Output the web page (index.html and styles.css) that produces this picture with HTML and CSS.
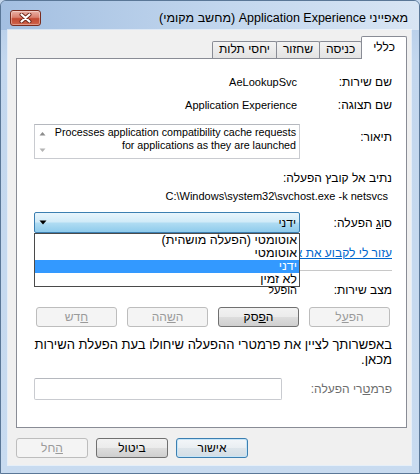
FILE: index.html
```html
<!DOCTYPE html>
<html lang="he" dir="rtl">
<head>
    <meta charset="UTF-8">
    <title>מאפייני Application Experience (מחשב מקומי)</title>
    <link rel="stylesheet" href="styles.css">
</head>
<body>

<div class="window">
    <div class="titlebar">
        <span class="title">מאפייני Application Experience (מחשב מקומי)</span>
        <button class="close-btn" type="button">
            <svg width="13" height="10" viewBox="0 0 13 10">
                <path d="M2.5 1.5 L10.5 8.5 M10.5 1.5 L2.5 8.5" stroke="#6a2418" stroke-width="4" stroke-linecap="round"/>
                <path d="M2.5 1.5 L10.5 8.5 M10.5 1.5 L2.5 8.5" stroke="#fff" stroke-width="2.2" stroke-linecap="round"/>
            </svg>
        </button>
    </div>

    <div class="client">
        <!-- tabs -->
        <div class="tabs">
            <div class="tab active">כללי</div>
            <div class="tab">כניסה</div>
            <div class="tab">שחזור</div>
            <div class="tab">יחסי תלות</div>
        </div>

        <div class="panel">
            <div class="row row-name">
                <span class="label">שם שירות:</span>
                <span class="value" dir="ltr">AeLookupSvc</span>
            </div>
            <div class="row row-display">
                <span class="label">שם תצוגה:</span>
                <span class="value" dir="ltr">Application Experience</span>
            </div>
            <div class="row row-desc">
                <span class="label">תיאור:</span>
                <div class="desc-box">
                    <div class="desc-scroll">
                        <svg width="7" height="5" viewBox="0 0 7 5"><path d="M0.5 4.5 L3.5 1 L6.5 4.5 Z" fill="#8c8c8c"/></svg>
                        <svg width="7" height="5" viewBox="0 0 7 5"><path d="M0.5 0.5 L3.5 4 L6.5 0.5 Z" fill="#b4b4b4"/></svg>
                    </div>
                    <div class="desc-text" dir="ltr">Processes application compatibility cache requests for applications as they are launched</div>
                </div>
            </div>

            <div class="path-label">נתיב אל קובץ הפעלה:</div>
            <div class="path-value" dir="ltr">C:\Windows\system32\svchost.exe -k netsvcs</div>

            <div class="row row-startup">
                <span class="label">סו<u>ג</u> הפעלה:</span>
                <div class="combo-wrap">
                    <div class="combo">
                        <span class="combo-text">ידני</span>
                        <svg class="combo-arrow" width="8" height="5" viewBox="0 0 8 5"><path d="M0.5 0.5 L7.5 0.5 L4 4.5 Z" fill="#000"/></svg>
                    </div>
                    <ul class="combo-list">
                        <li>אוטומטי (הפעלה מושהית)</li>
                        <li>אוטומטי</li>
                        <li class="selected">ידני</li>
                        <li>לא זמין</li>
                    </ul>
                </div>
            </div>

            <a class="help-link" href="#">עזור לי לקבוע את אפשרויות הפעלת השירות.</a>
            <div class="separator"></div>

            <div class="row row-status">
                <span class="label">מצב שירות:</span>
                <span class="value">הופעל</span>
            </div>

            <div class="service-buttons">
                <button class="btn" type="button" disabled>הפ<u>ע</u>ל</button>
                <button class="btn" type="button">ה<u>פ</u>סק</button>
                <button class="btn" type="button" disabled>ה<u>ש</u>הה</button>
                <button class="btn" type="button" disabled><u>ח</u>דש</button>
            </div>

            <p class="hint">באפשרותך לציין את פרמטרי ההפעלה שיחולו בעת הפעלת השירות מכאן.</p>

            <div class="row row-params">
                <span class="label disabled">פרמ<u>ט</u>רי הפעלה:</span>
                <input class="params-input" type="text" disabled>
            </div>
        </div>

        <div class="dialog-buttons">
            <button class="btn default" type="button">אישור</button>
            <button class="btn" type="button">ביטול</button>
            <button class="btn" type="button" disabled><u>ה</u>חל</button>
        </div>
    </div>
</div>

</body>
</html>
```

FILE: styles.css
```css
body {
    margin: 0;
    font-family: "Liberation Sans", "DejaVu Sans", sans-serif;
    font-size: 11px;
    color: #000;
    background: #c3d6ec;
}
.window {
    width: 420px;
    height: 474px;
    box-sizing: border-box;
    display: flex;
    flex-direction: column;
    border: 1px solid #5a7797;
    border-radius: 6px 6px 0 0;
    background: linear-gradient(to bottom, #b3cbe7 0, #c3d7ee 60px, #c8dbf0 100%);
    overflow: hidden;
}
.titlebar {
    height: 29px;
    box-sizing: border-box;
    padding: 5px 11px 0 9px;
    display: flex;
    align-items: center;
    justify-content: space-between;
    background: linear-gradient(to left, #d8e5f4 0, #c3d7ee 45%, #a3bfe1 100%);
}
.title {
    font-size: 12.5px;
    white-space: nowrap;
}
.close-btn {
    width: 31px;
    height: 16px;
    padding: 0;
    border: 1px solid #7a2d20;
    border-radius: 3px;
    background: linear-gradient(to bottom, #eab1a6 0, #d9806f 45%, #c24a33 55%, #d0644c 100%);
    display: flex;
    align-items: center;
    justify-content: center;
    box-shadow: inset 0 0 0 1px rgba(255, 255, 255, 0.35);
}
.client {
    flex: 1;
    margin: 0 8px 8px 7px;
    padding: 6px 4px 7px 8px;
    background: #f0f0f0;
    display: flex;
    flex-direction: column;
    box-shadow: 0 0 0 1px rgba(255, 255, 255, 0.55);
}

/* tabs */
.tabs {
    height: 23px;
    margin-bottom: -1px;
    display: flex;
    align-items: flex-end;
    position: relative;
    z-index: 1;
}
.tab {
    height: 17px;
    box-sizing: border-box;
    margin-bottom: 1px;
    margin-left: -1px;
    padding: 0 6px;
    line-height: 15px;
    font-size: 12px;
    border: 1px solid #898c95;
    border-bottom: none;
    border-radius: 2px 2px 0 0;
    background: linear-gradient(to bottom, #f3f3f3, #e3e3e3);
}
.tab.active {
    height: 23px;
    margin-bottom: 0;
    padding: 3px 11px 0 11px;
    background: #fff;
    position: relative;
    z-index: 2;
}
.panel {
    flex: 1;
    background: #fff;
    border: 1px solid #898c95;
    padding: 15px 14px 0 17px;
    display: flex;
    flex-direction: column;
}

/* label / value rows */
.row {
    display: flex;
    line-height: 16px;
}
.label {
    width: 92px;
    flex-shrink: 0;
    font-size: 12px;
}
.label.disabled {
    width: 110px;
    color: #6d6d6d;
}
.value {
    flex: 1;
    padding-right: 3px;
    text-align: right;
}
.row-display {
    margin-top: 7px;
}
.row-desc {
    margin-top: 11px;
}
.row-desc .label {
    padding-top: 5px;
}
.desc-box {
    flex: 1;
    height: 35px;
    box-sizing: border-box;
    border: 1px solid #c9cbd0;
    border-top-color: #b5b8be;
    display: flex;
    flex-direction: row-reverse;
}
.desc-text {
    flex: 1;
    padding: 1px 3px 0 0;
    font-size: 10.7px;
    line-height: 13px;
    text-align: right;
}
.desc-scroll {
    width: 15px;
    display: flex;
    flex-direction: column;
    justify-content: space-between;
    align-items: center;
    padding: 6px 0 5px;
    box-sizing: border-box;
}
.path-label {
    margin-top: 11px;
    line-height: 16px;
    font-size: 12px;
}
.path-value {
    margin-top: 2px;
    padding-right: 4px;
    line-height: 16px;
    text-align: right;
}

/* startup type combo */
.row-startup {
    margin-top: 8px;
    align-items: center;
}
.combo-wrap {
    flex: 1;
    position: relative;
    z-index: 3;
}
.combo {
    height: 21px;
    box-sizing: border-box;
    border: 1px solid #3c7fb1;
    border-radius: 2px;
    background: linear-gradient(to bottom, #e8f5fc 0, #d2ebf8 45%, #aedbf2 55%, #8fcbec 100%);
    display: flex;
    align-items: center;
    justify-content: space-between;
    padding: 0 3px 0 4px;
}
.combo-text {
    font-size: 12px;
}
.combo-list {
    position: absolute;
    top: 100%;
    left: 0;
    right: 0;
    margin: 0;
    padding: 0;
    list-style: none;
    background: #fff;
    border: 1px solid #4a4a4a;
    font-size: 12.5px;
}
.combo-list li {
    height: 13px;
    line-height: 13px;
    padding-right: 2px;
}
.combo-list li.selected {
    background: #3399ff;
    color: #fff;
}
.help-link {
    margin-top: 12px;
    line-height: 16px;
    font-size: 12px;
    color: #0066cc;
    white-space: nowrap;
}
.separator {
    margin-top: 9px;
    height: 1px;
    border-bottom: 1px solid #fff;
    background: #c8c8c8;
}
.row-status {
    margin-top: 10px;
}

/* buttons */
.btn {
    width: 81px;
    height: 20px;
    box-sizing: border-box;
    padding: 0;
    font-family: inherit;
    font-size: 12px;
    color: #000;
    border: 1px solid #707070;
    border-radius: 3px;
    background: linear-gradient(to bottom, #f2f2f2 0, #ebebeb 50%, #dddddd 51%, #cfcfcf 100%);
}
.btn:disabled {
    color: #9a9a9a;
    border-color: #bdbdbd;
    background: #f4f4f4;
}
.btn.default {
    border-color: #3c7fb1;
    background: linear-gradient(to bottom, #f3f6f9 0, #e9eef2 50%, #dde5eb 51%, #d3dde5 100%);
    box-shadow: inset 0 0 0 1px #c5e5f8;
}
.service-buttons {
    margin-top: 9px;
    padding-right: 2px;
    display: flex;
    gap: 10px;
}
.hint {
    margin: 10px 0 0;
    line-height: 15px;
    font-size: 13px;
}
.row-params {
    margin-top: 11px;
    align-items: center;
}
.params-input {
    flex: 1;
    height: 22px;
    box-sizing: border-box;
    margin: 0;
    border: 1px solid #c9cbd0;
    border-top-color: #b5b8be;
    border-radius: 2px;
    background: #fff;
}
.dialog-buttons {
    margin-top: 10px;
    display: flex;
    justify-content: flex-end;
    gap: 8px;
}
.dialog-buttons .btn {
    width: 72px;
}
```
